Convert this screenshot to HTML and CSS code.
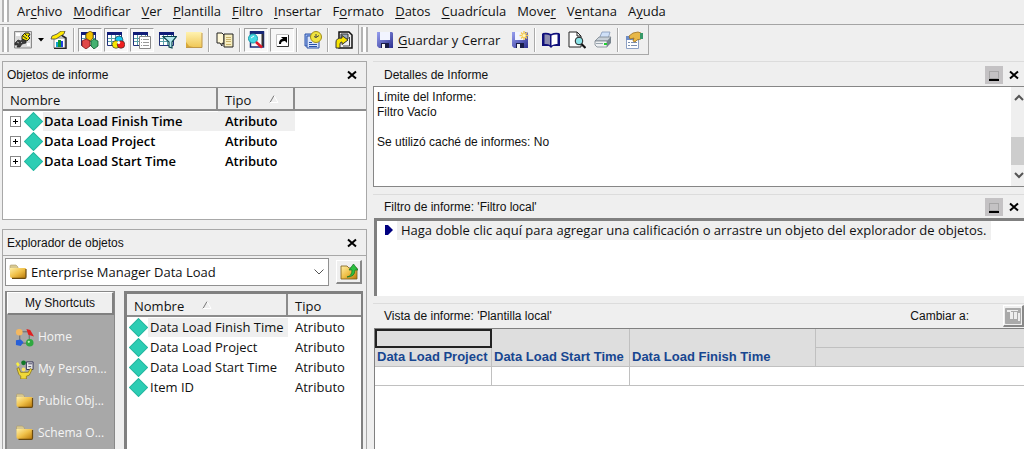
FILE: index.html
```html
<!DOCTYPE html>
<html lang="es">
<head>
<meta charset="utf-8">
<title>Editor de informes</title>
<link rel="stylesheet" href="styles.css">
</head>
<body>
<svg class="defs" aria-hidden="true">
  <defs>
    <linearGradient id="gold" x1="0" y1="0" x2="1" y2="1"><stop offset="0" stop-color="#fff0a8"/><stop offset=".5" stop-color="#f0c048"/><stop offset="1" stop-color="#b87808"/></linearGradient>
    <linearGradient id="blue" x1="0" y1="0" x2="1" y2="1"><stop offset="0" stop-color="#98a0f0"/><stop offset="1" stop-color="#2c3090"/></linearGradient>
    <linearGradient id="note" x1="0" y1="0" x2="0" y2="1"><stop offset="0" stop-color="#fff2b0"/><stop offset="1" stop-color="#f0c858"/></linearGradient>
    <symbol id="diamond" viewBox="0 0 18 18"><path d="M9 0.5L17.500 9L9 17.500L0.500 9Z" fill="#2ccdb4" stroke="#23b7a0"/></symbol>
    <symbol id="folder" viewBox="0 0 18 16"><path d="M1 2q0-1 1-1h5l2 2v3H1z" fill="#d8c890" stroke="#a89868" stroke-width=".6"/><path d="M1 4h15q1 0 1 1v8q0 1-1 1H3q-2 0-2-2z" fill="url(#gold)"/><path d="M17 5v8q0 1.300-1 1.300H3" fill="none" stroke="#6a4a10" stroke-width="1.200"/></symbol>
    <symbol id="sheet" viewBox="0 0 18 18"><path d="M0.500 1.500h14v13h-14z" fill="#fff" stroke="#203078"/><path d="M0 1h15v3H0z" fill="#101c78"/><path d="M4.500 4v10M8.500 4v10M12.500 4v10M1 7.500h13M1 10.500h13" stroke="#58a0a8"/></symbol>
    <symbol id="close" viewBox="0 0 10 10"><path d="M1 1.500L9 8.500M9 1.500L1 8.500" stroke="#000" stroke-width="2"/></symbol>
    <symbol id="dock" viewBox="0 0 18 18"><path d="M4.500 5.500h9v7h-9z" fill="none" stroke="#8a8a8a" stroke-dasharray="1 1"/><path d="M4 13h10v2H4z" fill="#000"/></symbol>
    <symbol id="floppy" viewBox="0 0 18 18"><path d="M1 1h15l1 1v15H3l-2-2z" fill="url(#blue)"/><path d="M4 1h10v8H4z" fill="#f2f4ff"/><path d="M5 12h8v5H5z" fill="#181c48"/><path d="M6 13h3v4H6z" fill="#f4f4f4"/></symbol>
    <symbol id="sort" viewBox="0 0 10 8"><path d="M1 7.500L5 .5" stroke="#777" fill="none"/><path d="M5 .5L9 7.500H1" stroke="#fff" fill="none"/></symbol>
  </defs>
</svg>

<nav class="menu" aria-label="Menú principal">
  <span class="grip"></span>
  <button>Ar<u>c</u>hivo</button><button><u>M</u>odificar</button><button><u>V</u>er</button><button><u>P</u>lantilla</button><button><u>F</u>iltro</button><button><u>I</u>nsertar</button><button>F<u>o</u>rmato</button><button><u>D</u>atos</button><button><u>C</u>uadrícula</button><button>Move<u>r</u></button><button>V<u>e</u>ntana</button><button>A<u>y</u>uda</button>
</nav>

<div class="bars">
  <div class="toolbar" role="toolbar" aria-label="Vista">
    <span class="grip"></span>
    <button class="tool" aria-label="Diseño"><svg viewBox="0 0 18 18"><path d="M.5 .5h17v16.500H.5z" fill="#dcdcdc" stroke="#8a8a8a"/><path d="M2 2h4v3H2zM13 12h3v3h-3z" fill="#fff"/><path d="M1 12l3-3 3 1 2-3 3 2v3l-4 1-2 3H3l1-2-3 0z" fill="#3c3c3c" stroke="#222" stroke-width=".7"/><path d="M8 8V5l3-3h4l1 2-2 1 2 2-3 3z" fill="#ece000" stroke="#222"/><path d="M9 5l4 3M11 3l2 2" stroke="#222"/><path d="M3 11l2 1M7 11l1 1" stroke="#aaa"/></svg></button>
    <button class="drop" aria-label="Más vistas"><svg viewBox="0 0 6 4"><path d="M0 0h6L3 3.500z"/></svg></button>
    <button class="tool" aria-label="Asistente"><svg viewBox="0 0 18 18"><path d="M4 7h11v10H4z" fill="#fff" stroke="#888"/><path d="M11 4l5 3v10.500H4" fill="none" stroke="#222" stroke-width="1.500"/><path d="M1 8l1-3 5-2 4-3h4l-1 3-5 3-3 2z" fill="#ffe800" stroke="#444" stroke-width=".8"/><path d="M6 11h2v5H6z" fill="#10a0d0"/><path d="M8 9h3v7H8z" fill="#109830"/><path d="M11 10h2v6h-2z" fill="#2040e0"/></svg></button>
    <span class="sep"></span>
    <button class="tool pressed" aria-label="Objetos de informe"><svg viewBox="0 0 18 18"><use href="#sheet"/><path d="M9 0l3 2v5l-3 3-4-3V3z" fill="#f0c000" stroke="#805c00" stroke-width=".8"/><path d="M5 8l4 2v5l-4 3-4-3v-5z" fill="#e04848" stroke="#7a1010" stroke-width=".8"/><path d="M13 8l4 2v5l-4 3-3-3v-5z" fill="#44b070" stroke="#0c5a28" stroke-width=".8"/></svg></button>
    <button class="tool pressed" aria-label="Métricas"><svg viewBox="0 0 18 18"><use href="#sheet"/><circle cx="12" cy="9" r="4" fill="#18c8f0" stroke="#222" stroke-width=".6"/><circle cx="9" cy="13.500" r="3.800" fill="#f8e800" stroke="#222" stroke-width=".6"/><circle cx="14" cy="13.500" r="3.800" fill="#f02020" stroke="#222" stroke-width=".6"/><circle cx="11.700" cy="11.500" r="1.500" fill="#fff"/></svg></button>
    <button class="tool pressed" aria-label="Detalles"><svg viewBox="0 0 18 18"><use href="#sheet"/><path d="M6.500 5.500h11v12h-11z" fill="#fff" stroke="#888"/><path d="M8 8.500h1M10 8.500h6M8 11.500h1M10 11.500h6M8 14.500h1M10 14.500h6" stroke="#999"/></svg></button>
    <button class="tool" aria-label="Filtro"><svg viewBox="0 0 18 18"><use href="#sheet"/><path d="M4 5.500h13.500L13 11v6l-3-1v-5z" fill="#b4e8ec" stroke="#104850" stroke-width="1.200"/></svg></button>
    <button class="tool" aria-label="Nota"><svg viewBox="0 0 18 18"><path d="M1 1h16v15H1z" fill="url(#note)"/><path d="M1 11l3 4 4 1H1z" fill="#d8a838"/><path d="M17 2v14.500H1" fill="none" stroke="#c09848"/></svg></button>
    <span class="sep"></span>
    <button class="tool" aria-label="Historial"><svg viewBox="0 0 18 18"><path d="M1 2h5l2 2v9l-2-1v3l-2-3H1z" fill="#fff8d8" stroke="#222"/><path d="M8 3h9v13H8z" fill="#f6eec0" stroke="#222"/><path d="M10 6.500h5M10 8.500h5M10 10.500h5M10 13.500h5" stroke="#c8b068"/></svg></button>
    <span class="sep"></span>
    <button class="tool pressed" aria-label="Explorador de objetos"><svg viewBox="0 0 18 18"><path d="M3.500 1h13v15h-13z" fill="#f8f8f8" stroke="#182878" stroke-width="1.500"/><path d="M3 0h14v3H3z" fill="#182878"/><path d="M15.500 3v13" stroke="#333" stroke-width="2"/><circle cx="6" cy="7.500" r="4.500" fill="#44d8e4" stroke="#1898a8"/><path d="M9 11l6 5.500" stroke="#e01828" stroke-width="2.600"/><path d="M4 7l3-2" stroke="#fff"/></svg></button>
    <button class="tool pressed" aria-label="Accesos directos"><svg viewBox="0 0 18 18"><path d="M3.500 3.500h12v12h-12z" fill="#fff" stroke="#c0c0c0"/><path d="M4 15.500h11.500V4" fill="none" stroke="#333"/><path d="M6 13c0-3 1-5 4-5L8 6h6v6l-2-2c-3 0-4 1-4 3z"/></svg></button>
    <span class="sep"></span>
    <button class="tool" aria-label="Programar"><svg viewBox="0 0 18 18"><path d="M1 3h11v12H1z" fill="#9cb8f0" stroke="#2850a8"/><path d="M3 5h12v12H3z" fill="#d8e4fa" stroke="#2850a8"/><path d="M5 13.500h8M5 15.500h8M5 11.500h3" stroke="#2850a8"/><circle cx="12" cy="6" r="5.500" fill="#f0e440" stroke="#a08c18"/><path d="M12 3v3.500l3-2M12 6.500l-2-1" fill="none" stroke="#444"/></svg></button>
    <span class="sep"></span>
    <button class="tool" aria-label="Ejecutar informe"><svg viewBox="0 0 18 18"><path d="M4 1h10l3 3v13H4z" fill="#eee" stroke="#111" stroke-width="1.500"/><path d="M6 3h7v5H6z" fill="#9ab" stroke="#333"/><path d="M14.500 6v9H8" stroke="#444" fill="none"/><path d="M1 17v-6q0-4 6-4V4.500l6 4.500-6 4.500V11q-2 0-2 2v4z" fill="#f8e400" stroke="#333"/></svg></button>
  </div>
  <div class="toolbar" role="toolbar" aria-label="Estándar">
    <span class="grip"></span>
    <button class="save"><svg viewBox="0 0 18 18"><use href="#floppy"/></svg><span><u>G</u>uardar y Cerrar</span></button>
    <button class="tool" aria-label="Guardar como"><svg viewBox="0 0 18 18"><use href="#floppy"/><path d="M13 0v9M8.500 4.500h9M10 1.500l6 6M16 1.500l-6 6" stroke="#f4cc58" stroke-width="1.500"/><circle cx="13" cy="4.500" r="1.500" fill="#fff8c0"/></svg></button>
    <span class="sep"></span>
    <button class="tool" aria-label="Ayuda"><svg viewBox="0 0 18 18"><path d="M0 3l1-1q4-1 8 1 4-2 8-1l1 1v12h-7l-2 2-2-2H0z" fill="#10107c"/><path d="M9.500 4.500q3-1.500 6-1v9.500q-3-.5-6 1.500z" fill="#fff"/><path d="M2.500 3.500q3-.5 5.500 1v9.500q-2.500-1.500-5.500-1z" fill="#8c8cb0"/></svg></button>
    <button class="tool" aria-label="Vista previa"><svg viewBox="0 0 18 18"><path d="M1 1h8l4 4v11H1z" fill="#fff" stroke="#222"/><path d="M9 1v4h4" fill="none" stroke="#222"/><circle cx="11" cy="10" r="3.800" fill="#8ce4e8" stroke="#222"/><path d="M13.500 13l4 4" stroke="#111" stroke-width="2.200"/></svg></button>
    <button class="tool" aria-label="Imprimir"><svg viewBox="0 0 18 18"><path d="M5 8l3-7h8l-2 7z" fill="#cfe0f8" stroke="#8498b8" stroke-width=".8"/><path d="M1 10l4-4h12l-3 4z" fill="#c8d0d8" stroke="#78848e" stroke-width=".8"/><path d="M1 10h12v6H3l-2-2z" fill="#eef0f2" stroke="#78848e" stroke-width=".8"/><path d="M13 10l4-4v6l-4 4z" fill="#78848e"/><path d="M2 12.500h7" stroke="#98a4ae"/><path d="M10 12h3v2h-3z" fill="#20d030"/></svg></button>
    <span class="sep"></span>
    <button class="tool" aria-label="Propiedades"><svg viewBox="0 0 18 18"><path d="M1.500 6.500h12v11h-12z" fill="#fff" stroke="#8ca0c4"/><path d="M1 5h13v4H1z" fill="#6c8cc8"/><path d="M3 11.500h2M6 11.500h6M3 14.500h2M6 14.500h6" stroke="#7c90b0"/><path d="M4 5l4-3 5-1 3 1v6l-4 1-2 2-2-1 1-3-4 1z" fill="#e8b848" stroke="#9c7020" stroke-width=".8"/><path d="M15 2h3v6h-3z" fill="#389868"/></svg></button>
  </div>
</div>

<main class="work">
  <div class="left">
    <section class="panel objects">
      <header class="title"><h2>Objetos de informe</h2><button class="x" aria-label="Cerrar"><svg viewBox="0 0 10 10"><use href="#close"/></svg></button></header>
      <table class="list tree">
        <colgroup><col class="c-name"><col class="c-type"><col></colgroup>
        <thead><tr><th>Nombre</th><th>Tipo <svg class="sort" viewBox="0 0 10 8"><use href="#sort"/></svg></th><th></th></tr></thead>
        <tbody>
          <tr class="current"><td><div class="item"><button class="plus" aria-label="Expandir"></button><svg class="dia"><use href="#diamond"/></svg><span>Data Load Finish Time</span></div></td><td>Atributo</td><td></td></tr>
          <tr><td><div class="item"><button class="plus" aria-label="Expandir"></button><svg class="dia"><use href="#diamond"/></svg><span>Data Load Project</span></div></td><td>Atributo</td><td></td></tr>
          <tr><td><div class="item"><button class="plus" aria-label="Expandir"></button><svg class="dia"><use href="#diamond"/></svg><span>Data Load Start Time</span></div></td><td>Atributo</td><td></td></tr>
        </tbody>
      </table>
    </section>

    <section class="panel explorer">
      <header class="title"><h2>Explorador de objetos</h2><button class="x" aria-label="Cerrar"><svg viewBox="0 0 10 10"><use href="#close"/></svg></button></header>
      <div class="path">
        <div class="combo"><svg class="fold"><use href="#folder"/></svg><select aria-label="Carpeta"><option>Enterprise Manager Data Load</option></select><svg class="chev" viewBox="0 0 10 6"><path d="M.5.5L5 5 9.500.5" fill="none" stroke="#555"/></svg></div>
        <button class="up" aria-label="Subir un nivel"><svg viewBox="0 0 18 18"><path d="M1 3h6l2 2h8v11H1z" fill="url(#gold)" stroke="#7a5a18" stroke-width=".8"/><path d="M7 14q5-1 5-7H9l4.500-6L18 7h-3q0 7-8 7z" fill="#2cc040" stroke="#107020" stroke-width=".7"/></svg></button>
      </div>
      <div class="browse">
        <nav class="shortcuts" aria-label="My Shortcuts">
          <button class="cap">My Shortcuts</button>
          <a href="#home"><svg viewBox="0 0 20 20"><path d="M5 4h10v12H5z" fill="none" stroke="#666"/><circle cx="4.500" cy="4.500" r="3.500" fill="#f4b860"/><path d="M12 1l4 1 4 7-6-2z" fill="#e02020"/><circle cx="15.500" cy="15.500" r="4" fill="#30a840"/><path d="M1 13l5-1 3 3-3 4-5-1z" fill="#2860d8"/><circle cx="14.500" cy="14.500" r="1.200" fill="#b8f0b8"/></svg><span>Home</span></a>
          <a href="#personal"><svg viewBox="0 0 20 20"><circle cx="9" cy="3" r="2.500" fill="#107828"/><path d="M1 4l2-2 2 3-2 2z" fill="#f8f040"/><path d="M12 2h7v8h-7z" fill="#e8e8e8" stroke="#335"/><path d="M14 4h4M14 7h3" stroke="#446"/><path d="M2 9l2-1 2 5h8l2-4 2 1-3 6-3 1v3H6v-3l-2-2z" fill="#f0d838" stroke="#8a7418" stroke-width=".8"/><circle cx="9" cy="10" r="2" fill="#f8e468"/></svg><span>My Person...</span></a>
          <a href="#public"><svg class="fold"><use href="#folder"/></svg><span>Public Obj...</span></a>
          <a href="#schema"><svg class="fold"><use href="#folder"/></svg><span>Schema O...</span></a>
        </nav>
        <div class="files">
          <table class="list">
            <colgroup><col class="c-file"><col></colgroup>
            <thead><tr><th>Nombre <svg class="sort" viewBox="0 0 10 8"><use href="#sort"/></svg></th><th>Tipo</th></tr></thead>
            <tbody>
              <tr class="first"><td><div class="item"><svg class="dia"><use href="#diamond"/></svg><span>Data Load Finish Time</span></div></td><td>Atributo</td></tr>
              <tr><td><div class="item"><svg class="dia"><use href="#diamond"/></svg><span>Data Load Project</span></div></td><td>Atributo</td></tr>
              <tr><td><div class="item"><svg class="dia"><use href="#diamond"/></svg><span>Data Load Start Time</span></div></td><td>Atributo</td></tr>
              <tr><td><div class="item"><svg class="dia"><use href="#diamond"/></svg><span>Item ID</span></div></td><td>Atributo</td></tr>
            </tbody>
          </table>
        </div>
      </div>
    </section>
  </div>

  <div class="right">
    <section class="pane">
      <header class="title"><h2>Detalles de Informe</h2><button class="dock" aria-label="Minimizar"><svg viewBox="0 0 18 18"><use href="#dock"/></svg></button><button class="x" aria-label="Cerrar"><svg viewBox="0 0 10 10"><use href="#close"/></svg></button></header>
      <div class="details">
        <div class="text"><p>Límite del Informe:</p><p>Filtro Vacío</p><p>&nbsp;</p><p>Se utilizó caché de informes: No</p></div>
        <div class="scroll" aria-hidden="true"><svg viewBox="0 0 10 8"><path d="M1 6l4-4 4 4" fill="none" stroke="#555" stroke-width="2"/></svg><span class="thumb"></span><svg viewBox="0 0 10 8"><path d="M1 2l4 4 4-4" fill="none" stroke="#555" stroke-width="2"/></svg></div>
      </div>
    </section>

    <section class="pane">
      <header class="title"><h2>Filtro de informe: 'Filtro local'</h2><button class="dock" aria-label="Minimizar"><svg viewBox="0 0 18 18"><use href="#dock"/></svg></button><button class="x" aria-label="Cerrar"><svg viewBox="0 0 10 10"><use href="#close"/></svg></button></header>
      <div class="filter"><svg viewBox="0 0 8 10"><path d="M0 0h3l5 5-5 5H0z" fill="#000080"/></svg><p>Haga doble clic aquí para agregar una calificación o arrastre un objeto del explorador de objetos.</p></div>
    </section>

    <section class="pane view">
      <header class="title"><h2>Vista de informe: 'Plantilla local'</h2><span class="switch">Cambiar a:</span><button class="mode" aria-label="Gráfico"><svg viewBox="0 0 16 16"><path d="M.5.5h15v15H.5z" fill="#aaa" stroke="#aaa"/><path d="M2 2h4v2H2zM5 4h3v7H5zM9 4h3v7H9zM13 5h2v8h-2zM6 2h7v1H6z" fill="#eee"/></svg></button></header>
      <div class="canvas">
        <table class="grid">
          <colgroup><col class="g1"><col class="g2"><col class="g3"><col></colgroup>
          <thead>
            <tr><th class="cell-on"></th><th rowspan="2">Data Load Start Time</th><th rowspan="2">Data Load Finish Time</th><th></th></tr>
            <tr><th>Data Load Project</th><th></th></tr>
          </thead>
          <tbody><tr><td></td><td></td><td colspan="2"></td></tr></tbody>
        </table>
      </div>
    </section>
  </div>
</main>
</body>
</html>
```
FILE: styles.css
```css
* { box-sizing: border-box; }
body {
  margin: 0;
  height: 100vh;
  display: flex;
  flex-direction: column;
  overflow: hidden;
  background: #efefef;
  color: #111;
  font: 13px/18px "Open Sans", "Noto Sans", sans-serif;
}
.defs { position: absolute; width: 0; height: 0; }
button { font: inherit; color: inherit; background: none; border: 0; padding: 0; }
button svg { display: block; }
h2, p { margin: 0; font-weight: 400; }
u { text-underline-offset: 2px; }

/* Menu and toolbars */
.grip {
  width: 7px;
  align-self: stretch;
  flex: none;
  border: solid #b4b4b4;
  border-width: 0 2px;
  background: #fff;
}
.menu {
  height: 25px;
  flex: none;
  display: flex;
  align-items: center;
  gap: 11px;
  padding: 0 2px 2px;
  border-bottom: 1px solid #a4a4a4;
}
.menu .grip { margin-right: -3px; }
.bars { display: flex; flex: none; height: 30px; }
.toolbar {
  display: flex;
  align-items: center;
  gap: 2px;
  padding: 2px;
  border: solid #a8a8a8;
  border-width: 0 1px 1px 0;
}
.tool {
  width: 24px;
  height: 24px;
  flex: none;
  display: grid;
  place-items: center;
  border: 1px solid transparent;
}
.tool svg { width: 18px; height: 18px; }
.pressed { background: #f7f7f7; border-color: #a0a0a0 #fff #fff #a0a0a0; }
.drop { width: 8px; height: 24px; }
.drop svg { width: 6px; height: 4px; margin: auto; }
.sep { width: 2px; height: 24px; background: #aaa; border-right: 1px solid #fff; margin-right: 1px; }
.save { display: flex; align-items: center; gap: 4px; padding: 0 6px; }
.save svg { width: 18px; height: 18px; }

/* Work area */
.work { flex: 1; min-height: 0; display: flex; gap: 6px; padding: 6px 0 0 2px; }
.left { flex: none; width: 365px; display: flex; flex-direction: column; gap: 9px; }
.right { flex: 1; min-width: 0; display: flex; flex-direction: column; gap: 7px; }
.title {
  height: 26px;
  flex: none;
  display: flex;
  align-items: center;
  padding: 0 9px 0 4px;
  font: 12px/16px "Liberation Sans", Arial, sans-serif;
}
.title h2 { flex: 1; font-size: 12px; }
.x svg { width: 10px; height: 10px; }
.panel { border: 1px solid #a8a8a8; background: #efefef; }
.objects { flex: none; height: 159px; background: #fff; }
.objects .title { background: #efefef; border-bottom: 1px solid #909090; }

.list { width: 100%; border-collapse: separate; border-spacing: 0; table-layout: fixed; }
.list th {
  height: 23px;
  padding: 2px 7px 0;
  text-align: left;
  font-weight: 400;
  background: #efefef;
  border: solid #8c8c8c;
  border-width: 0 2px 2px 0;
  white-space: nowrap;
}
.list th:last-child { border-right: 0; }
.list td { padding: 0 7px; height: 20px; line-height: 19px; white-space: nowrap; }
.list td:first-child { padding: 0; }
.item { display: flex; align-items: center; height: 19px; }
.item span { padding: 0 2px; flex: 1; }
.dia { width: 19px; height: 19px; flex: none; }
.sort { width: 10px; height: 8px; margin: 0 0 2px 14px; }
.c-name { width: 215px; }
.c-type { width: 77px; }
.c-file { width: 161px; }
.tree td { font-weight: 600; color: #000; }
.tree .item { padding-left: 7px; }
.tree .item span { padding-left: 1px; }
.files .item { padding-left: 2px; }
.current td:nth-child(2), .current .item span, .first .item span { background: #efefef; }
.plus {
  width: 11px;
  height: 11px;
  margin-right: 3px;
  flex: none;
  border: 1px solid #888;
  background:
    linear-gradient(#000, #000) center / 5px 1px no-repeat,
    linear-gradient(#000, #000) center / 1px 5px no-repeat,
    #fff;
}

.explorer { flex: 1; min-height: 0; display: flex; flex-direction: column; border-bottom: 0; }
.explorer .title { border-bottom: 1px solid #a8a8a8; }
.path { display: flex; align-items: center; gap: 7px; padding: 2px 4px 5px 2px; flex: none; }
.combo { flex: 1; height: 28px; display: flex; align-items: center; background: #fff; border: 1px solid #909090; padding: 0 4px 0 3px; }
.fold { width: 18px; height: 16px; flex: none; }
.combo select { flex: 1; appearance: none; border: 0; background: transparent; font: inherit; color: inherit; padding: 0 4px; }
.chev { width: 10px; height: 6px; }
.up, .mode {
  width: 26px;
  height: 24px;
  display: grid;
  place-items: center;
  border: solid;
  border-width: 1px 2px 2px 1px;
  border-color: #fff #888 #888 #fff;
}
.up svg { width: 18px; height: 18px; }
.browse { flex: 1; min-height: 0; display: flex; gap: 9px; padding: 0 3px 0 2px; }
.shortcuts {
  width: 110px;
  flex: none;
  display: flex;
  flex-direction: column;
  background: #a8a8a8;
  border: solid #888;
  border-width: 1px 1px 0 2px;
}
.cap {
  height: 23px;
  flex: none;
  margin-bottom: 6px;
  background: #efefef;
  border: solid;
  border-width: 1px 2px 2px 1px;
  border-color: #fff #808080 #808080 #fff;
  font: 12px/16px "Liberation Sans", Arial, sans-serif;
}
.shortcuts a {
  height: 32px;
  flex: none;
  display: flex;
  align-items: center;
  gap: 4px;
  padding-left: 8px;
  color: #f4f4f4;
  font-size: 12px;
  text-decoration: none;
  white-space: nowrap;
}
.shortcuts a svg { width: 19px; height: 19px; flex: none; }
.shortcuts a .fold { height: 16px; }
.files { flex: 1; min-width: 0; background: #fff; border: solid #808080; border-width: 3px 2px 0 3px; }

/* Report panes */
.right .title { height: 25px; padding: 1px 5px 0 11px; gap: 5px; border-top: 1px solid #dcdcdc; }
.dock { width: 18px; height: 18px; background: #c4c2c4; }
.right .title .x { margin-left: 1px; }
.details {
  height: 101px;
  display: flex;
  background: #fff;
  border: 1px solid #868686;
  border-right: 0;
  font: 12px/15px "Liberation Sans", Arial, sans-serif;
}
.text { flex: 1; padding: 3px; }
.scroll { width: 13px; display: flex; flex-direction: column; justify-content: space-between; align-items: flex-end; background: #efefef; padding: 7px 0; }
.scroll svg { width: 10px; height: 8px; }
.thumb { width: 13px; height: 28px; margin-top: 28px; background: #cdcdcd; }
.right .pane + .pane .title { height: 24px; padding-top: 0; }
.filter {
  height: 78px;
  margin-left: 1px;
  display: flex;
  align-items: flex-start;
  background: #fff;
  border: solid #808080;
  border-width: 3px 0 0 3px;
  padding-left: 8px;
}
.filter svg { width: 8px; height: 10px; margin: 4px 4px 0 0; flex: none; }
.filter p { background: #efefef; padding: 0 5px 1px 4px; white-space: nowrap; }
.view { flex: 1; min-height: 0; display: flex; flex-direction: column; }
.right .pane.view .title { padding-right: 0; height: 25px; }
.switch { margin-right: 29px; }
.mode { width: 21px; height: 22px; }
.mode svg { width: 16px; height: 16px; }
.canvas { flex: 1; margin-left: 1px; background: #fff; border: solid #808080; border-width: 1px 0 0 1px; }
.grid { width: 100%; table-layout: fixed; border-collapse: separate; border-spacing: 0; }
.grid th, .grid td { height: 19px; padding: 0; border: solid #c0c0c0; border-width: 0 1px 1px 0; }
.grid th {
  background: #dedede;
  color: #174690;
  font: bold 13px/18px "Liberation Sans", Arial, sans-serif;
  text-align: left;
  vertical-align: bottom;
  padding-left: 2px;
  white-space: nowrap;
}
.grid tr > :last-child { border-right: 0; }
.grid .cell-on { border: 2px solid #222; }
.g1 { width: 117px; }
.g2 { width: 138px; }
.g3 { width: 186px; }
```
